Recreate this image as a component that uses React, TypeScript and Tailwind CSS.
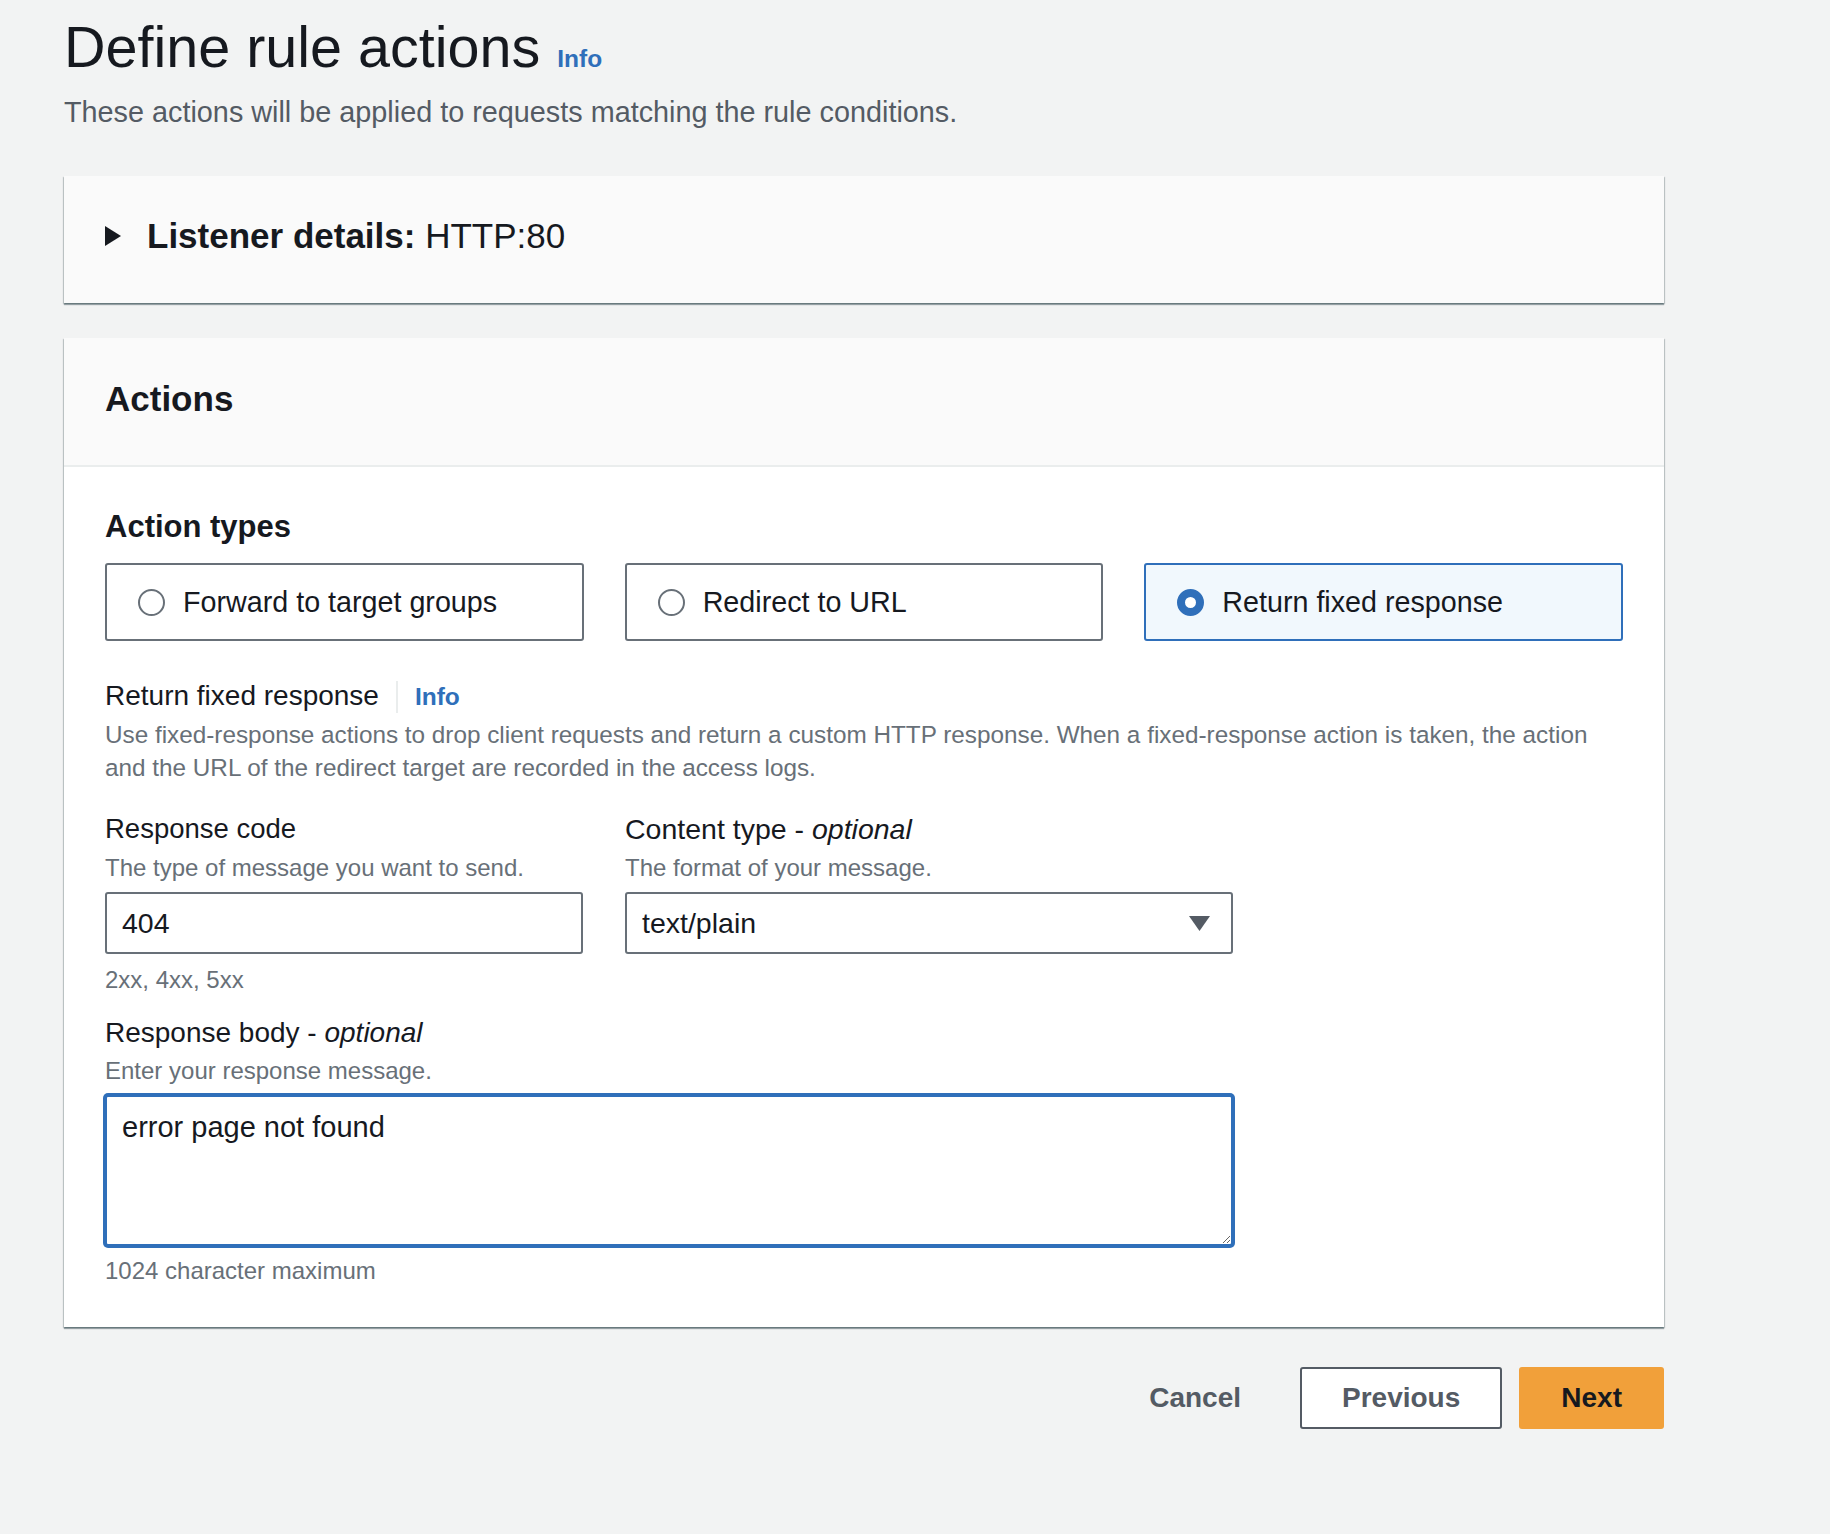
import React from "react"

function Radio({ checked }: { checked?: boolean }) {
	if (checked) {
		return <span className="w-[27px] h-[27px] rounded-full border-[8px] border-[#2f6fba] bg-white shrink-0" />
	}
	return <span className="w-[27px] h-[27px] rounded-full border-2 border-[#687078] bg-white shrink-0" />
}

function Tile({ label, checked }: { label: string; checked?: boolean }) {
	return (
		<div
			className={
				checked
					? "h-[78px] flex items-center gap-[18px] pl-[31px] rounded-[3px] border-2 border-[#2f6fba] bg-[#f1f8fd]"
					: "h-[78px] flex items-center gap-[18px] pl-[31px] rounded-[3px] border-2 border-[#687078] bg-white"
			}
		>
			<Radio checked={checked} />
			<span className="text-[28.7px] leading-[36px] text-[#16191f]">{label}</span>
		</div>
	)
}

export default function App() {
	return (
		<div className="min-h-[1534px] bg-[#f2f3f3] pl-[64px] pt-[15px] pb-[100px] font-['Liberation_Sans',Arial,sans-serif] text-[#16191f]">
			<div className="w-[1600px]">
				<div className="flex items-baseline gap-[17px]">
					<h1 className="text-[57.5px] leading-[64px] text-[#16191f]">Define rule actions</h1>
					<span className="text-[24.5px] font-bold text-[#2f6fba]">Info</span>
				</div>
				<p className="mt-[13px] text-[28.8px] leading-[40px] text-[#545b64]">
					These actions will be applied to requests matching the rule conditions.
				</p>

				<div className="mt-[44px] h-[127px] bg-[#fafafa] px-[41px] pb-[8px] flex items-center shadow-[0_2px_1px_0_rgba(0,28,36,0.35),1px_1px_1px_0_rgba(0,28,36,0.18),-1px_1px_1px_0_rgba(0,28,36,0.18)]">
					<svg width="16" height="20" viewBox="0 0 16 20" className="shrink-0">
						<polygon points="0,0 16,10 0,20" fill="#16191f" />
					</svg>
					<div className="ml-[26px] text-[35px] leading-[44px]">
						<span className="font-bold">Listener details:</span> HTTP:80
					</div>
				</div>

				<div className="mt-[35px] bg-white shadow-[0_2px_1px_0_rgba(0,28,36,0.35),1px_1px_1px_0_rgba(0,28,36,0.18),-1px_1px_1px_0_rgba(0,28,36,0.18)]">
					<div className="h-[129px] bg-[#fafafa] border-b-2 border-[#eaeded] px-[41px] pb-[6px] flex items-center">
						<h2 className="text-[35px] leading-[44px] font-bold">Actions</h2>
					</div>

					<div className="px-[41px] pt-[40px] pb-[40px]">
						<h3 className="text-[31px] leading-[40px] font-bold">Action types</h3>
						<div className="mt-[16px] grid grid-cols-3 gap-[41px]">
							<Tile label="Forward to target groups" />
							<Tile label="Redirect to URL" />
							<Tile label="Return fixed response" checked />
						</div>

						<div className="mt-[37px] flex items-baseline">
							<span className="text-[28px] leading-[36px]">Return fixed response</span>
							<span className="self-center mx-[17px] w-[2px] h-[32px] bg-[#eaeded]" />
							<span className="text-[24.5px] leading-[36px] font-bold text-[#2f6fba]">Info</span>
						</div>
						<p className="mt-[3px] text-[24.3px] leading-[33px] text-[#687078] whitespace-nowrap">
							Use fixed-response actions to drop client requests and return a custom HTTP response. When a fixed-response action is taken, the action
							<br />
							and the URL of the redirect target are recorded in the access logs.
						</p>

						<div className="mt-[27px] flex gap-[42px]">
							<div className="w-[478px]">
								<div className="text-[27.5px] leading-[36px]">Response code</div>
								<div className="mt-[5px] text-[24px] leading-[32px] text-[#687078]">
									The type of message you want to send.
								</div>
								<input
									readOnly
									value="404"
									className="mt-[8px] w-full h-[62px] border-2 border-[#687078] rounded-[3px] pl-[15px] text-[28.5px] text-[#16191f] bg-white outline-none"
								/>
							</div>
							<div className="w-[608px]">
								<div className="text-[28.5px] leading-[36px]">
									Content type - <i>optional</i>
								</div>
								<div className="mt-[5px] text-[24px] leading-[32px] text-[#687078]">
									The format of your message.
								</div>
								<div className="mt-[8px] w-full h-[62px] border-2 border-[#687078] rounded-[3px] pl-[15px] pr-[21px] flex items-center justify-between bg-white">
									<span className="text-[28.5px] text-[#16191f]">text/plain</span>
									<svg width="21" height="15" viewBox="0 0 21 15">
										<polygon points="0,0 21,0 10.5,15" fill="#545b64" />
									</svg>
								</div>
							</div>
						</div>
						<div className="mt-[10px] text-[24px] leading-[32px] text-[#687078]">2xx, 4xx, 5xx</div>

						<div className="mt-[19px] text-[28px] leading-[36px]">
							Response body - <i>optional</i>
						</div>
						<div className="mt-[4px] text-[24px] leading-[32px] text-[#687078]">
							Enter your response message.
						</div>
						<textarea
							readOnly
							defaultValue="error page not found"
							className="block mt-[8px] w-[1128px] h-[151px] border-2 border-[#2f6fba] shadow-[0_0_0_2px_#2f6fba] rounded-[3px] pl-[15px] pt-[12px] text-[29px] leading-[36px] text-[#16191f] bg-white outline-none"
						/>
						<div className="mt-[9px] text-[24px] leading-[32px] text-[#687078]">1024 character maximum</div>
					</div>
				</div>

				<div className="mt-[40px] flex justify-end items-center gap-[17px]">
					<button className="h-[62px] px-[42px] text-[28px] font-bold text-[#545b64]">Cancel</button>
					<button className="h-[62px] px-[40px] border-2 border-[#545b64] rounded-[3px] bg-white text-[28px] font-bold text-[#545b64]">
						Previous
					</button>
					<button className="h-[62px] px-[42px] rounded-[3px] bg-[#f1a03a] text-[28px] font-bold text-[#16191f]">
						Next
					</button>
				</div>
			</div>
		</div>
	)
}
